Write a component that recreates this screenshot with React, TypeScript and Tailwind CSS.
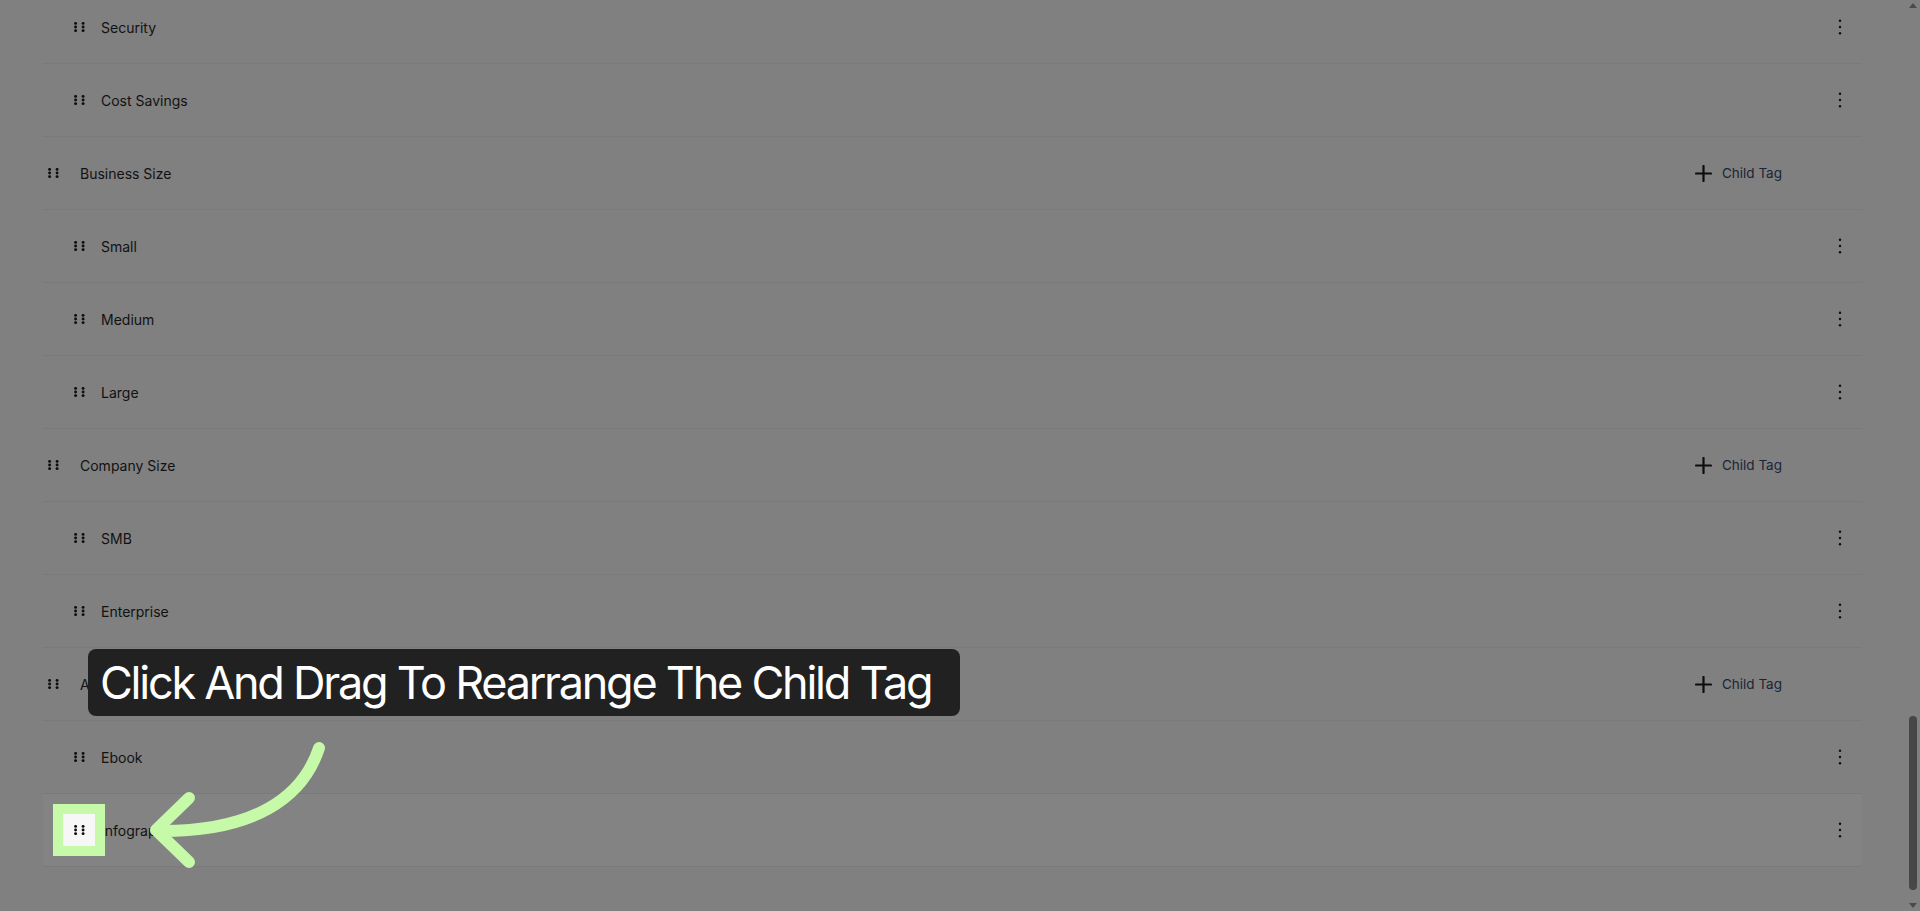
import React from "react";

type Row = { label: string; parent?: boolean; active?: boolean };

const rows: Row[] = [
  { label: "Security" },
  { label: "Cost Savings" },
  { label: "Business Size", parent: true },
  { label: "Small" },
  { label: "Medium" },
  { label: "Large" },
  { label: "Company Size", parent: true },
  { label: "SMB" },
  { label: "Enterprise" },
  { label: "Asset Type", parent: true },
  { label: "Ebook" },
  { label: "Infographic", active: true },
];

function GripIcon() {
  return (
    <svg width="11" height="10" viewBox="0 0 11 10" className="shrink-0">
      {[1.6, 9.1].map((x) =>
        [1.4, 5, 8.6].map((y) => <circle key={`${x}-${y}`} cx={x} cy={y} r="1.45" fill="#0d0d0d" />)
      )}
    </svg>
  );
}

function KebabIcon() {
  return (
    <svg width="4" height="16" viewBox="0 0 4 16" className="shrink-0">
      <circle cx="2" cy="1.7" r="1.2" fill="#0d0d0d" />
      <circle cx="2" cy="8" r="1.2" fill="#0d0d0d" />
      <circle cx="2" cy="14.3" r="1.2" fill="#0d0d0d" />
    </svg>
  );
}

function PlusIcon() {
  return (
    <svg width="17" height="17" viewBox="0 0 17 17" className="shrink-0">
      <path d="M8.5 1v15M1 8.5h15" stroke="#0d0d0d" strokeWidth="2.2" strokeLinecap="round" />
    </svg>
  );
}

function TagRow({ row }: { row: Row }) {
  return (
    <div
      className={`flex h-[73px] items-center border-b border-[#7a7a7a] ${
        row.active ? "bg-[#838383]" : ""
      } ${row.parent ? "pl-[5px]" : "pl-[31px]"}`}
    >
      <GripIcon />
      <span
        className={`text-[14px] text-[#121212] ${row.parent ? "ml-[21px]" : "ml-[16px]"}`}
      >
        {row.label}
      </span>
      {row.parent ? (
        <button className="ml-auto mr-[80px] flex items-center gap-[10px] text-[13.5px] text-[#1b2437]">
          <PlusIcon />
          Child Tag
        </button>
      ) : (
        <div className="ml-auto mr-[20px] flex items-center">
          <KebabIcon />
        </div>
      )}
    </div>
  );
}

function Scrollbar() {
  return (
    <div className="flex w-[15px] shrink-0 flex-col items-center bg-[#808080]">
      <div className="mt-[3px] h-0 w-0 border-x-[4px] border-b-[5px] border-x-transparent border-b-[#4a4a4a]" />
      <div className="flex-1" />
      <div className="mb-[13px] h-[174px] w-[8px] rounded-full bg-[#474747]" />
      <div className="mb-[3px] h-0 w-0 border-x-[4px] border-t-[5px] border-x-transparent border-t-[#4a4a4a]" />
    </div>
  );
}

export default function App() {
  return (
    <div
      className="relative flex h-[911px] w-full overflow-hidden bg-[#808080]"
      style={{ fontFamily: "Inter, 'Noto Sans', sans-serif" }}
    >
      <main className="flex-1 overflow-hidden px-[43px]">
        <div className="mt-[-9px]">
          {rows.map((r) => (
            <TagRow key={r.label} row={r} />
          ))}
        </div>
      </main>
      <Scrollbar />

      {/* highlighted drag handle */}
      <div className="absolute left-[53px] top-[804px] flex h-[52px] w-[52px] items-center justify-center bg-[#c6f9a8]">
        <div className="flex h-[32px] w-[32px] items-center justify-center bg-[#f7f7f7]">
          <GripIcon />
        </div>
      </div>

      {/* arrow */}
      <svg
        className="pointer-events-none absolute left-0 top-0"
        width="400"
        height="911"
        viewBox="0 0 400 911"
      >
        <path
          d="M319 748 C 303 797 255 832 158 831"
          fill="none"
          stroke="#c6f9a8"
          strokeWidth="12"
          strokeLinecap="round"
        />
        <path
          d="M189 798 L156 830 L189 862"
          fill="none"
          stroke="#c6f9a8"
          strokeWidth="12"
          strokeLinecap="round"
          strokeLinejoin="round"
        />
      </svg>

      {/* tooltip */}
      <div className="absolute left-[88px] top-[649px] flex h-[67px] w-[872px] items-center rounded-[8px] bg-[#212121] pl-[12px]">
        <span className="whitespace-nowrap text-[45px] leading-none text-white tracking-[-0.05em]">
          Click And Drag To Rearrange The Child Tag
        </span>
      </div>
    </div>
  );
}
